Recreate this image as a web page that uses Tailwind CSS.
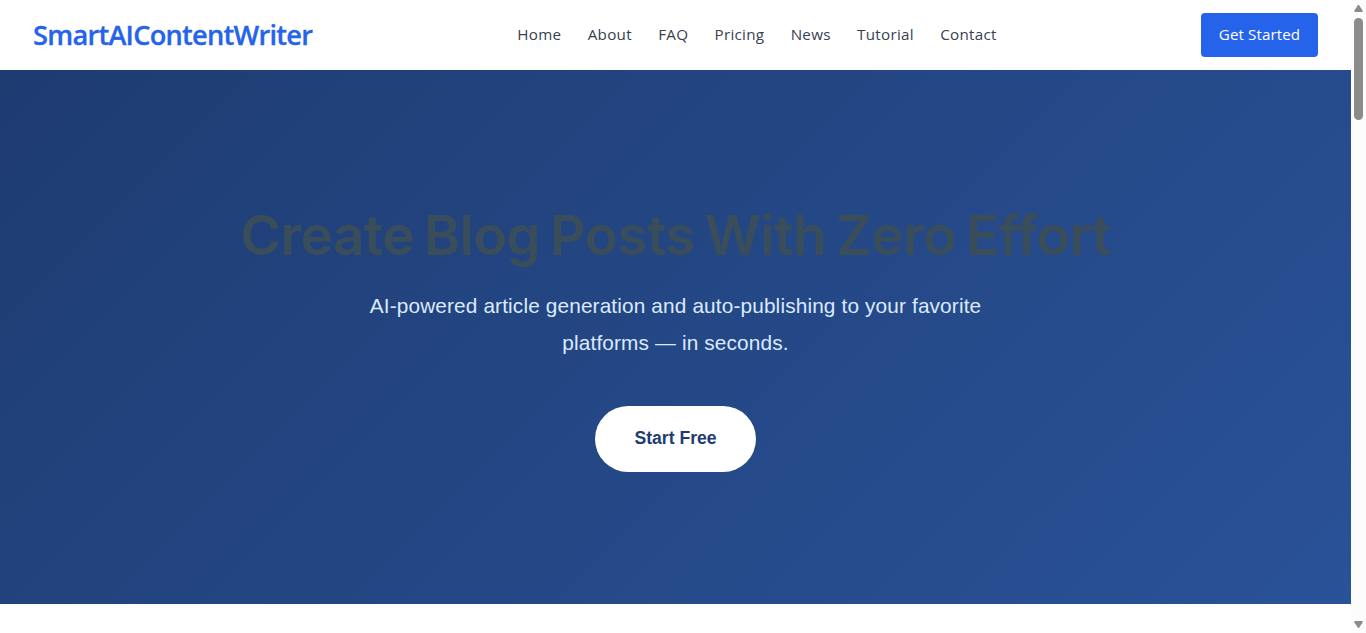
<!DOCTYPE html>
<html lang="en">
<head>
  <meta charset="UTF-8">
  <title>SmartAIContentWriter</title>
  <script src="https://cdn.jsdelivr.net/npm/@tailwindcss/browser@4"></script>
</head>
<body class="bg-white h-screen flex overflow-hidden">
  <div class="w-[1351px] shrink-0">
    <header class="h-[70px] bg-white flex items-center justify-between px-[33px] font-['Open_Sans',sans-serif]">
      <a href="#" class="w-[280px] text-[27.2px] leading-[40px] font-semibold tracking-[-0.75px] text-[#2563eb] [-webkit-text-stroke:0.3px_#2563eb] whitespace-nowrap">SmartAIContentWriter</a>
      <nav class="flex gap-[26.3px] pb-0.5 text-[15.2px] leading-6 font-medium tracking-[0.28px] text-[#374151] whitespace-nowrap">
        <a href="#">Home</a>
        <a href="#">About</a>
        <a href="#">FAQ</a>
        <a href="#">Pricing</a>
        <a href="#">News</a>
        <a href="#">Tutorial</a>
        <a href="#">Contact</a>
      </nav>
      <a href="#" class="w-[117px] h-11 pb-0.5 flex items-center justify-center rounded bg-[#2563eb] text-white text-[15.2px] font-medium tracking-[0.08px] whitespace-nowrap">Get Started</a>
    </header>

    <section class="h-[534px] bg-[linear-gradient(135deg,#1e3c72,#2a5298)] flex flex-col items-center pt-[132px] text-center font-['Liberation_Sans',Arial,sans-serif]">
      <h1 class="text-[55px] leading-[67px] font-semibold tracking-[-0.6px] [word-spacing:-3.4px] text-[#3a4d5a] font-['Inter',sans-serif] whitespace-nowrap">Create Blog Posts With Zero Effort</h1>
      <p class="mt-[18px] w-[700px] text-[20.8px] leading-[37px] tracking-[0.14px] text-[#dbeafe]">AI-powered article generation and auto-publishing to your favorite<br>platforms — in seconds.</p>
      <a href="#" class="mt-[45px] w-[161px] h-[66px] pb-0.5 flex items-center justify-center rounded-full bg-white text-[#1e3c72] text-[17.6px] font-bold">Start Free</a>
    </section>
  </div>

  <!-- scrollbar -->
  <div class="w-[15px] h-full bg-[#fcfcfc] flex flex-col items-center">
    <svg class="mt-1 h-2 w-[9px] shrink-0" viewBox="0 0 9 8" fill="#8b8b8b"><path d="M3.9 1.2a.8.8 0 0 1 1.2 0L8.6 6.6Q9 8 8 8H1Q0 8 .4 6.6z"/></svg>
    <div class="mt-1.5 w-[9px] h-[102px] rounded-full bg-[#8b8b8b]"></div>
    <svg class="mt-auto mb-1 h-2 w-[9px] shrink-0" viewBox="0 0 9 8" fill="#8b8b8b"><path d="M3.9 6.8a.8.8 0 0 0 1.2 0L8.6 1.4Q9 0 8 0H1Q0 0 .4 1.4z"/></svg>
  </div>
</body>
</html>
